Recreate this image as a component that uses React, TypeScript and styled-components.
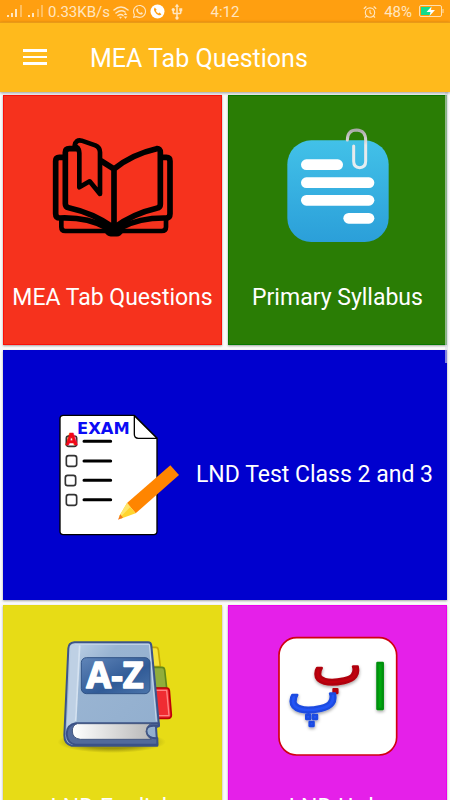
import React from "react";
import styled, { createGlobalStyle } from "styled-components";
import { AlarmClock } from "lucide-react";
import { FaWhatsapp } from "react-icons/fa";
import { MdUsb } from "react-icons/md";

const GlobalStyle = createGlobalStyle`
  *, *::before, *::after { box-sizing: border-box; }
  body { margin: 0; background: #fafafa; font-family: Roboto, "Noto Sans", sans-serif; }
  svg { display: block; flex: none; }
`;

const Screen = styled.div`
  display: flex;
  flex-direction: column;
  height: 100vh;
  overflow: hidden;
`;

const StatusBar = styled.div`
  display: grid;
  grid-template-columns: 1fr auto 1fr;
  align-items: center;
  height: 22px;
  padding: 1px 6px 0;
  background: #ff9f10;
  color: #ffe6c0;
  font-size: 15px;
  line-height: 20px;
  white-space: nowrap;
`;

const StatusGroup = styled.div<{ $end?: boolean }>`
  display: flex;
  align-items: center;
  justify-content: ${(p) => (p.$end ? "flex-end" : "flex-start")};
  gap: ${(p) => (p.$end ? "7px" : "3px")};
`;

const AppBar = styled.header`
  position: relative;
  z-index: 1;
  display: flex;
  align-items: center;
  gap: 42px;
  height: 70px;
  flex: none;
  padding: 2px 22px 0;
  background: #ffba1c;
  color: #fff;
  border-top: 1px solid #e99a18;
  box-shadow: 0 1px 3px rgba(0, 0, 0, 0.4);
`;

const MenuButton = styled.button`
  display: flex;
  padding: 0 0 4px;
  border: 0;
  background: none;
  color: inherit;
  cursor: pointer;
`;

const Title = styled.h1`
  margin: 0;
  font-size: 25px;
  line-height: 32px;
  font-weight: 400;
`;

const Content = styled.main`
  position: relative;
  flex: 1;
  min-height: 0;
  overflow-y: auto;
  scrollbar-width: none;
`;

const TileGrid = styled.div`
  display: grid;
  grid-template-columns: 1fr 1fr;
  grid-auto-rows: 250px;
  gap: 5px 6px;
  padding: 3px;
`;

const Tile = styled.button<{ $color: string; $edge: string; $wide?: boolean }>`
  display: flex;
  flex-direction: ${(p) => (p.$wide ? "row" : "column")};
  grid-column: ${(p) => (p.$wide ? "1 / -1" : "auto")};
  align-items: center;
  justify-content: ${(p) => (p.$wide ? "center" : "flex-start")};
  gap: ${(p) => (p.$wide ? "16px" : "37px")};
  padding: ${(p) => (p.$wide ? "0 0 0 43px" : "31px 0 0")};
  border: 1px solid ${(p) => p.$edge};
  background: ${(p) => p.$color};
  color: #fff;
  font: 400 23px/28px Roboto, "Noto Sans", sans-serif;
  white-space: nowrap;
  box-shadow: 0 1px 2px rgba(0, 0, 0, 0.35);
  cursor: pointer;
`;

const ScrollThumb = styled.div`
  position: absolute;
  top: 0;
  right: 2px;
  width: 3px;
  height: 271px;
  background: rgba(220, 220, 230, 0.6);
`;

const Art = styled.svg`
  width: 120px;
  height: 120px;
  overflow: visible;
`;

const Signal = () => (
  <svg width="18" height="13" viewBox="0 0 18 13" fill="currentColor" aria-hidden="true">
    <path d="M1 10h2v2H1zM5 8h2v4H5zM9 4h2v8H9z" />
    <path d="M14 0h2v12h-2z" opacity=".45" />
  </svg>
);

const WeakSignal = () => (
  <svg width="18" height="13" viewBox="0 0 18 13" fill="currentColor" aria-hidden="true">
    <path d="M1 10h2v2H1zM5 8h2v4H5z" />
    <path d="M10 4h2v8h-2zM14 0h2v12h-2z" opacity=".45" />
  </svg>
);

const Wifi = () => (
  <svg width="16" height="14" viewBox="0 0 16 14" fill="none" stroke="currentColor" strokeWidth="1.5" aria-hidden="true">
    <path d="M1 5Q8-1 15 5M3 8q5-4 9-1M5 10.500q3-2 5 0" strokeLinecap="round" />
    <path d="M6.500 12h2l-1 1.500zM11 10l1.500-2 1.500 2M11 11.500l1.500 2 1.500-2" fill="currentColor" strokeWidth=".5" />
  </svg>
);

const Call = () => (
  <svg width="15" height="15" viewBox="0 0 15 15" aria-hidden="true">
    <circle cx="7.500" cy="7.500" r="7" fill="#fff" />
    <path d="M4.800 3.500q-1.500 1-.5 3.500 1.500 3 4.500 4.200 2 .5 2.600-1l-2-1.600-1.100.8Q6.500 8.500 5.800 6.700l.9-.9z" fill="#ff9f10" />
  </svg>
);

const Battery = () => (
  <svg width="25" height="13" viewBox="0 0 25 13" aria-hidden="true">
    <rect x=".5" y=".5" width="22" height="11" rx="1.500" fill="none" stroke="#ffe0b0" />
    <path d="M23.500 4h1v4h-1z" fill="#ffe0b0" />
    <path d="M2 2h10v8H2z" fill="#14dc8c" />
    <path d="M12.500 1.500 7.500 7h4l-1 4L16 5h-4z" fill="#fff" />
  </svg>
);

const MenuLines = () => (
  <svg width="26" height="18" viewBox="0 0 26 18" aria-hidden="true">
    <path d="M1 1h24v3H1zM1 8h24v2H1zM1 14h24v3H1z" fill="#fff" />
  </svg>
);

const BookArt = () => (
  <Art viewBox="39 6 360 360" fill="none" stroke="#000" strokeWidth="17" strokeLinejoin="round" strokeLinecap="round" aria-hidden="true">
    <path d="M222 132V305M222 132Q275 88 350 71Q361 70 361 82V238Q361 248 350 250Q280 266 224 307M220 307Q160 264 86 248Q76 246 76 236V82Q76 71 88 71H112M184 108L222 132" />
    <path d="M104 62Q107 43 125 47L166 61Q180 67 180 82V207L149 169L118 187V84Q118 70 106 63" strokeWidth="14" />
    <path d="M68 97H58Q47 97 47 108V266Q47 279 60 279Q142 276 200 308M370 97H379Q390 97 390 108V266Q390 279 377 279Q300 278 242 308" />
    <path d="M64 284V306Q64 318 76 318H365Q378 318 378 306V284" strokeWidth="14" />
    <path d="M196 315Q222 296 248 315Q239 329 231 329H212Q203 329 196 315Z" fill="#000" strokeWidth="11" />
  </Art>
);

const NoteArt = () => (
  <Art viewBox="24 36 360 360" aria-hidden="true">
    <defs>
      <linearGradient id="note" x2="0" y2="1">
        <stop stopColor="#42c1e8" />
        <stop offset="1" stopColor="#2b9fd9" />
      </linearGradient>
      <linearGradient id="clip" x2="0" y2="1">
        <stop stopColor="#aaa" />
        <stop offset=".4" stopColor="#e8e8e8" />
        <stop offset="1" stopColor="#e4edf2" />
      </linearGradient>
    </defs>
    <rect x="52" y="76" width="304" height="305" rx="72" fill="url(#note)" />
    <g fill="#fff">
      <rect x="93" y="133" width="126" height="32" rx="16" />
      <rect x="93" y="187" width="220" height="32" rx="16" />
      <rect x="93" y="240" width="220" height="32" rx="16" />
      <rect x="220" y="294" width="93" height="32" rx="16" />
    </g>
    <path d="M232 75Q232 45 260 45Q287 46 287 76V139Q287 158 269 158Q251 158 251 139V93" fill="none" stroke="url(#clip)" strokeWidth="9" strokeLinecap="round" />
  </Art>
);

const ExamArt = () => (
  <Art viewBox="60 45 360 360" aria-hidden="true">
    <path d="M70 46H283L351 115V394Q351 404 341 404H70Q60 404 60 394V56Q60 46 70 46Z" fill="#fff" stroke="#000" strokeWidth="4" />
    <path d="M283 47V103Q283 115 295 115H351Z" fill="#fff" stroke="#000" strokeWidth="4" strokeLinejoin="round" />
    <text x="190" y="101" textAnchor="middle" fontFamily="DejaVu Sans, sans-serif" fontWeight="700" fontSize="49" fill="#0b0bf5">EXAM</text>
    <g fill="#fff" stroke="#333" strokeWidth="5">
      <rect x="79" y="108" width="31" height="31" rx="7" />
      <rect x="79" y="167" width="31" height="32" rx="7" />
      <rect x="76" y="226" width="31" height="31" rx="7" />
      <rect x="79" y="284" width="31" height="32" rx="7" />
    </g>
    <text x="95" y="135" textAnchor="middle" fontFamily="DejaVu Sans, sans-serif" fontWeight="700" fontSize="45" fill="#f00818" stroke="#f00818" strokeWidth="2">A</text>
    <path d="M132 124H212M132 183H212M132 241H212M132 299H212" stroke="#000" strokeWidth="9" strokeLinecap="round" />
    <path d="M391 196L417 225L287 340L261 309Z" fill="#ff8500" />
    <path d="M261 309L287 340L242 356L238 348Z" fill="#ffd52e" />
    <path d="M261 309L271 321L239 353L238 348Z" fill="#ffe56b" />
    <path d="M241 343L249 353L234 359Z" fill="#f47a1c" />
  </Art>
);

const DictionaryArt = () => (
  <Art viewBox="9 21 360 360" strokeLinejoin="round" aria-hidden="true">
    <defs>
      <linearGradient id="cover" x2="1" y2="1">
        <stop stopColor="#c3d6e9" />
        <stop offset=".3" stopColor="#99b4d2" />
        <stop offset="1" stopColor="#91aece" />
      </linearGradient>
      <linearGradient id="pages">
        <stop stopColor="#fff" />
        <stop offset="1" stopColor="#b8b8b8" />
      </linearGradient>
      <linearGradient id="plate" x2="1" y2="1">
        <stop stopColor="#6085b8" />
        <stop offset=".6" stopColor="#315b97" />
        <stop offset="1" stopColor="#4b74aa" />
      </linearGradient>
      <radialGradient id="ground">
        <stop offset=".6" stopColor="#6f6a08" stopOpacity=".6" />
        <stop offset="1" stopColor="#6f6a08" stopOpacity="0" />
      </radialGradient>
    </defs>
    <ellipse cx="185" cy="336" rx="163" ry="33" fill="url(#ground)" />
    <path d="M300 52H318Q324 52 325 60L331 110H307Z" fill="#f5e23a" stroke="#c8a900" strokeWidth="5" />
    <path d="M306 112H336Q343 112 344 120L350 174H312Z" fill="#91ad3b" stroke="#628719" strokeWidth="5" />
    <path d="M314 174H350Q357 174 358 182L364 255Q364 265 354 265H322Z" fill="#f02c32" stroke="#bd0008" strokeWidth="5" />
    <path d="M316 181H350L357 257H324" fill="none" stroke="#ff8585" strokeWidth="4" />
    <path d="M73 37H294Q303 37 304 47L327 287L318 292L322 347H65Q43 342 43 316L55 55Q56 39 73 37Z" fill="url(#cover)" stroke="#3c548a" strokeWidth="6" />
    <path d="M74 44Q63 45 62 58L49 305Q57 281 75 276L89 44Z" fill="#bed0e4" />
    <path d="M89 46L77 274" stroke="#d5e2f0" strokeWidth="5" />
    <path d="M75 43H298L319 274" fill="none" stroke="#c8d7e8" strokeWidth="3" />
    <path d="M326 280H79Q50 284 50 312Q52 340 76 344H322V325Q289 324 289 302Q290 283 326 289Z" fill="#526a9b" stroke="#3b5186" strokeWidth="6" />
    <path d="M82 281H302Q288 290 288 305Q289 319 304 328H91Q67 325 67 303Q67 285 82 281Z" fill="url(#pages)" stroke="#44577f" strokeWidth="3" />
    <rect x="94" y="83" width="206" height="108" rx="15" fill="url(#plate)" stroke="#315487" strokeWidth="3" />
    <text x="195" y="174" textAnchor="middle" fontFamily="Open Sans, Noto Sans, sans-serif" fontWeight="700" fontSize="108" fill="#fff" stroke="#fff" strokeWidth="4">A-Z</text>
  </Art>
);

const LettersArt = () => (
  <Art viewBox="39 36 360 360" aria-hidden="true">
    <defs>
      <filter id="soft" x="-30%" y="-30%" width="160%" height="160%">
        <feDropShadow dx="1" dy="5" stdDeviation="5" floodOpacity=".35" />
      </filter>
    </defs>
    <rect x="42" y="38" width="353" height="352" rx="53" fill="#fff" stroke="#d00010" strokeWidth="5" />
    <g fontFamily="DejaVu Sans, sans-serif" fontWeight="400" textAnchor="middle" strokeWidth="7" strokeLinejoin="round" filter="url(#soft)">
      <text x="216" y="176" fontSize="160" fill="#c00010" stroke="#b0000c">ب</text>
      <text x="145" y="262" fontSize="168" fill="#2454f5" stroke="#1f4be0">پ</text>
      <text x="345" y="252" fontSize="180" fill="#06a80d" stroke="#06900c">ا</text>
    </g>
  </Art>
);

const tiles = [
  { label: "MEA Tab Questions", color: "#f6321d", edge: "#fa1008", art: <BookArt /> },
  { label: "Primary Syllabus", color: "#2a7d05", edge: "#087800", art: <NoteArt /> },
  { label: "LND Test Class 2 and 3", color: "#0000ce", edge: "#0000ce", art: <ExamArt />, wide: true },
  { label: "LND English", color: "#e7dc16", edge: "#e5d815", art: <DictionaryArt /> },
  { label: "LND Urdu", color: "#e520e9", edge: "#ed00ed", art: <LettersArt /> },
];

export default function App() {
  return (
    <Screen>
      <GlobalStyle />
      <StatusBar>
        <StatusGroup>
          <Signal />
          <WeakSignal />
          <span>0.33KB/s</span>
          <Wifi />
          <FaWhatsapp size={15} />
          <Call />
          <MdUsb size={18} />
        </StatusGroup>
        <span>4:12</span>
        <StatusGroup $end>
          <AlarmClock size={14} strokeWidth={2} />
          <span>48%</span>
          <Battery />
        </StatusGroup>
      </StatusBar>
      <AppBar>
        <MenuButton type="button" aria-label="Open menu">
          <MenuLines />
        </MenuButton>
        <Title>MEA Tab Questions</Title>
      </AppBar>
      <Content>
        <TileGrid>
          {tiles.map((t) => (
            <Tile key={t.label} type="button" $color={t.color} $edge={t.edge} $wide={t.wide}>
              {t.art}
              <span>{t.label}</span>
            </Tile>
          ))}
        </TileGrid>
        <ScrollThumb />
      </Content>
    </Screen>
  );
}
